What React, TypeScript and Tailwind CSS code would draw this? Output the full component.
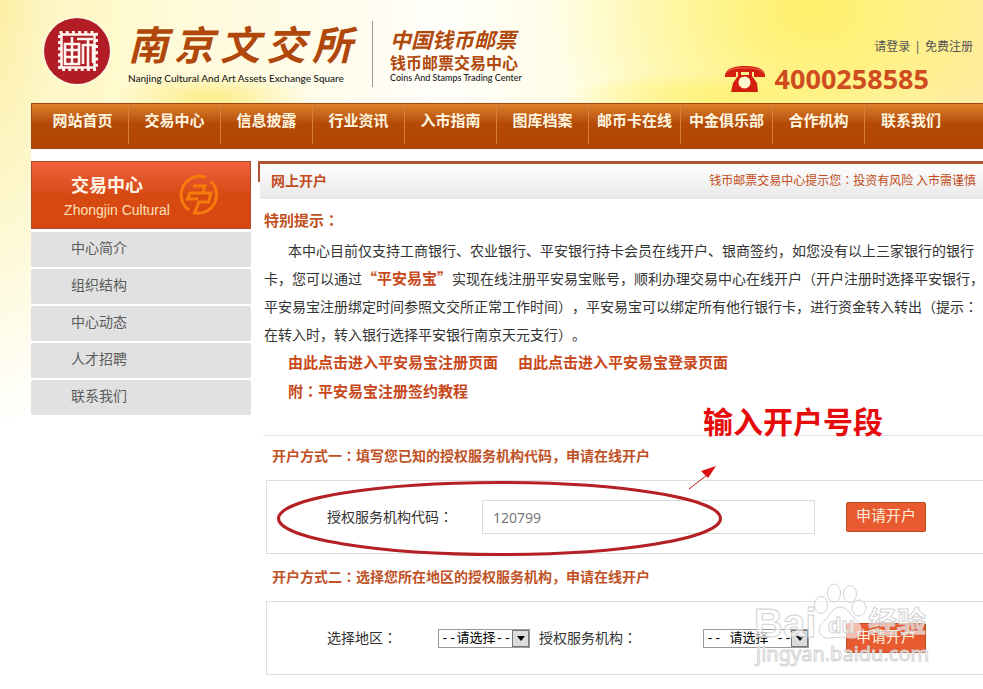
import React from 'react';

const NAV = ['网站首页', '交易中心', '信息披露', '行业资讯', '入市指南', '图库档案', '邮币卡在线', '中金俱乐部', '合作机构', '联系我们'];
const SIDE = ['中心简介', '组织结构', '中心动态', '人才招聘', '联系我们'];

/* Sets full-width colons in the middle of their cell. */
function Cn({ text }: { text: string }) {
  return (
    <>
      {text.split(/(：)/).map((part, i) =>
        part === '：' ? (
          <span key={i} lang="zh-TW" className="font-['Noto_Sans_CJK_TC',sans-serif]">
            {part}
          </span>
        ) : (
          part
        ),
      )}
    </>
  );
}

function SealLogo() {
  return (
    <svg viewBox="0 0 68 68" className="size-[68px] shrink-0" aria-hidden="true">
      <circle cx="34" cy="34" r="34" fill="#fffdf2" />
      <circle cx="34" cy="34" r="33" fill="#b11c25" />
      <rect x="16.500" y="15.500" width="37" height="37" fill="none" stroke="#fff5ee" strokeWidth="3" strokeDasharray="3 3.200" />
      <rect x="18.500" y="17.500" width="33" height="33" fill="none" stroke="#fff5ee" strokeWidth="2.500" />
      <g fill="none" stroke="#fff5ee" strokeWidth="2.600">
        <path d="M22 47V27H36V47ZM29 20V47M22 33H36M22 40H36" />
        <path d="M34 22H50M40 27V47M45 22V50M40 28H50V46" />
      </g>
    </svg>
  );
}

function PhoneIcon() {
  return (
    <svg viewBox="0 0 40 27" className="h-[27px] w-10 shrink-0" aria-hidden="true">
      <path d="M0 9C1 2 10 0 20 0S39 2 40 9V11H29V6H11V11H0Z" fill="#d41f10" />
      <path d="M1 7C6 2 12 2 20 2S34 2 39 7" fill="none" stroke="#ef6a4a" strokeWidth="1" />
      <path d="M13 6H16V9H24V6H27V10L32 17L33 26H6L8 17L13 10Z" fill="#d41f10" />
      <circle cx="19.500" cy="16.500" r="6" fill="#fffbd0" />
    </svg>
  );
}

function CoinIcon() {
  return (
    <svg viewBox="0 0 40 42" className="h-[42px] w-10 shrink-0" fill="none" stroke="#f57c0c" aria-hidden="true">
      <path d="M27 3.500A18.500 18.500 0 0 0 10 36M14 38.500A18.500 18.500 0 0 0 32 7.500" strokeWidth="3" />
      <path d="M14 12H26L23.500 19H11L8.500 25H19M23 19H32L29.500 28H20L15.500 39" strokeWidth="3" />
    </svg>
  );
}

function DropDown({ id, text, className }: { id: string; text: string; className: string }) {
  return (
    <span className={`relative h-[19px] ${className}`}>
      <select
        id={id}
        className="block h-[19px] w-full appearance-none border border-[#999] bg-white pl-0.5 font-['Liberation_Mono','Noto_Sans_CJK_SC',monospace] text-[13px] leading-[17px] text-black"
      >
        <option>{text}</option>
      </select>
      <span className="pointer-events-none absolute top-px right-px flex h-[17px] w-[17px] items-center justify-center border border-[#777] bg-[#dcdcdc]">
        <svg viewBox="0 0 8 5" className="h-[5px] w-2" aria-hidden="true">
          <path d="M0 0H8L4 5Z" fill="#000" />
        </svg>
      </span>
    </span>
  );
}

function ApplyButton({ className }: { className: string }) {
  return (
    <button
      type="button"
      className={`h-[30px] w-20 shrink-0 rounded-xs border border-[#c04a20] bg-[#e85a30] pb-1 text-[15px] leading-6 text-[#fff0dc] ${className}`}
    >
      申请开户
    </button>
  );
}

function Annotation() {
  return (
    <div className="pointer-events-none absolute top-[402px] left-[277px]">
      <svg viewBox="0 0 445 156" className="h-[156px] w-[445px]" fill="none" aria-hidden="true">
        <ellipse cx="222.500" cy="116.500" rx="221" ry="36" stroke="#b42024" strokeWidth="3" />
        <path d="M412 87L430 73" stroke="#c01818" strokeWidth="1" />
        <path d="M439 64L424 69L431 76Z" fill="#dc1010" />
      </svg>
      <p className="absolute top-0 left-[426px] text-[30px] leading-10 font-bold whitespace-nowrap text-[#e60c0c]">输入开户号段</p>
    </div>
  );
}

function Watermark() {
  return (
    <svg
      viewBox="0 0 180 90"
      className="pointer-events-none absolute top-[580px] left-[753px] h-[90px] w-[180px]"
      fill="#ffffff"
      fillOpacity="0.6"
      stroke="#d2d2d2"
      strokeWidth="1"
      aria-hidden="true"
    >
      <ellipse cx="68" cy="25" rx="6.500" ry="8.500" />
      <ellipse cx="81" cy="13" rx="6.500" ry="9" />
      <ellipse cx="97" cy="14" rx="6.500" ry="8.500" />
      <ellipse cx="106" cy="28" rx="7" ry="8" />
      <path d="M87 27C95 27 97 35 103 40C112 48 109 59 98 58C91 57 84 57 77 58C65 59 63 48 71 41C77 36 79 27 87 27Z" />
      <text x="1" y="57" fontSize="40" fontWeight="700" fontFamily="Liberation Sans, sans-serif">Bai</text>
      <text x="75" y="53" fontSize="22" fontWeight="700" fontFamily="Liberation Sans, sans-serif">du</text>
      <text x="115" y="53" fontSize="29" fontWeight="700" fontFamily="Noto Sans CJK SC, sans-serif">经验</text>
      <text x="3" y="81" fontSize="20" fontFamily="Noto Sans, sans-serif">jingyan.baidu.com</text>
    </svg>
  );
}

function Brand() {
  return (
    <>
      <div className="mt-[17px]">
        <SealLogo />
      </div>
      <div className="mt-[14px] ml-[17px] whitespace-nowrap">
        <p className="flex gap-1.5 font-['Noto_Sans_CJK_SC',sans-serif] text-[40px] leading-[58px] font-bold text-[#b0480c] italic">
          {['南', '京', '文', '交', '所'].map((c) => (
            <span key={c}>{c}</span>
          ))}
        </p>
        <p className="font-['Lato',sans-serif] text-[10px] leading-3 font-medium text-[#222]">Nanjing Cultural And Art Assets Exchange Square</p>
      </div>
    </>
  );
}

export default function App() {
  return (
    <div
      lang="zh-CN"
      className="relative min-h-screen overflow-hidden bg-white bg-[radial-gradient(ellipse_120px_430px_at_0_0,#fcefa4,#fdf4b8aa_50%,transparent),linear-gradient(to_bottom,transparent_55%,#ffffff88),radial-gradient(ellipse_100px_24px_at_210px_98px,#fdec80,transparent),radial-gradient(ellipse_160px_26px_at_720px_98px,#fff170,transparent),radial-gradient(ellipse_260px_190px_at_810px_10px,#fff06c,#fff27a88_50%,transparent),linear-gradient(to_right,transparent_30px,#fff9cc_90px,#fffbe0_24%,#fffefa_45%,#fffde0_62%,#fff4a0_85%,#fee9a8)] bg-[length:100%_440px,100%_160px,100%_160px,100%_160px,100%_160px,100%_160px] bg-no-repeat font-['Noto_Sans','Noto_Sans_CJK_SC',sans-serif] text-sm text-[#333] [text-spacing-trim:space-all]"
    >
      <header className="flex h-[103px] items-start pl-[43px]">
        <Brand />
        <div className="mt-[21px] ml-[20px] h-[66px] w-px bg-[#999]" />
        <div className="mt-[27px] ml-[17px] whitespace-nowrap">
          <p className="font-['Noto_Sans_CJK_SC',sans-serif] text-[21px] leading-[25px] font-bold text-[#b0480c] italic">中国钱币邮票</p>
          <p className="font-['Noto_Sans_CJK_SC',sans-serif] text-base leading-5 font-bold text-[#b0480c]">钱币邮票交易中心</p>
          <p className="font-['Lato',sans-serif] text-[9px] leading-3 font-medium text-[#222]">Coins And Stamps Trading Center</p>
        </div>
        <div className="mt-[37px] ml-auto flex flex-col">
          <div className="flex justify-end gap-1 pr-[10px] text-xs leading-5 text-[#555]">
            <a href="#login">请登录</a>
            <span>|</span>
            <a href="#register">免费注册</a>
          </div>
          <div className="flex items-center gap-2.5 pr-[54px]">
            <PhoneIcon />
            <span className="font-['Open_Sans',sans-serif] text-[27px] leading-11 font-bold text-[#cf4c20]">4000258585</span>
          </div>
        </div>
      </header>

      <nav className="ml-[31px] flex h-[46px] border-y border-l border-[#a0480c] bg-linear-to-b from-[#dd812c] via-[#b34a05] via-45% to-[#b34503] pl-[5px] font-['Noto_Sans_CJK_SC',sans-serif]">
        {NAV.map((item, i) => (
          <a
            key={item}
            href="#nav"
            className={`mt-0.5 flex h-[38px] w-[92px] shrink-0 justify-center text-[15px] leading-[28px] font-bold whitespace-nowrap text-[#fff6e0] ${i < NAV.length - 1 ? 'border-r border-[#d98038]' : ''}`}
          >
            {item}
          </a>
        ))}
      </nav>

      <div className="ml-[31px] flex bg-white">
        <aside className="mt-3 w-[220px] shrink-0 font-['Noto_Sans_CJK_SC',sans-serif]">
          <div className="flex h-[68px] items-center border border-[#b04a2c] bg-linear-to-b from-[#ee613c] via-[#d64a12] via-50% to-[#d84710] pl-8">
            <div className="w-[106px] pt-0.5 text-center whitespace-nowrap">
              <p className="pr-5 text-lg leading-7 font-bold text-[#fff6e8]">交易中心</p>
              <p className="font-['Liberation_Sans',sans-serif] text-sm leading-6 text-[#fbe0b8]">Zhongjin Cultural</p>
            </div>
            <div className="ml-[9px]">
              <CoinIcon />
            </div>
          </div>
          <ul className="mt-[3px] flex flex-col gap-0.5">
            {SIDE.map((item) => (
              <li key={item}>
                <a href="#side" className="block h-[35px] rounded-xs bg-[#e1e1e1] pl-10 text-sm leading-[30px] text-[#5c5c5c]">
                  {item}
                </a>
              </li>
            ))}
          </ul>
        </aside>

        <main className="mt-3 ml-[7px] min-w-0 flex-1 font-['Noto_Sans_CJK_SC',sans-serif] whitespace-nowrap">
          <div className="relative border-t-3 border-[#b4532f] pl-0.5">
            <div className="absolute top-0 left-0 h-[18px] w-0.5 bg-[#b4532f]" />
            <div className="flex h-[35px] items-center justify-between bg-linear-to-b from-white to-[#e8e8e8] pr-[7px] pb-1 pl-[11px] text-[#c04c20]">
              <h1 className="text-sm font-bold">网上开户</h1>
              <p className="text-xs">
                <Cn text="钱币邮票交易中心提示您：投资有风险 入市需谨慎" />
              </p>
            </div>
          </div>

          <section className="mt-[7px] pl-[6px] leading-7">
            <h2 className="mb-0.5 text-[15px] font-bold text-[#c25020]">
              <Cn text="特别提示：" />
            </h2>
            <p className="indent-6">
              <Cn text="本中心目前仅支持工商银行、农业银行、平安银行持卡会员在线开户、银商签约，如您没有以上三家银行的银行" />
              <br />
              <Cn text="卡，您可以通过" />
              <b className="text-[15px] leading-none text-[#c9481a]">“平安易宝”</b>
              <Cn text="实现在线注册平安易宝账号，顺利办理交易中心在线开户（开户注册时选择平安银行，" />
              <br />
              <Cn text="平安易宝注册绑定时间参照文交所正常工作时间），平安易宝可以绑定所有他行银行卡，进行资金转入转出（提示：" />
              <br />
              <Cn text="在转入时，转入银行选择平安银行南京天元支行）。" />
            </p>
            <div className="flex gap-5 pl-6 text-[15px] font-bold text-[#c9481a]">
              <a href="#signup">由此点击进入平安易宝注册页面</a>
              <a href="#signin">由此点击进入平安易宝登录页面</a>
            </div>
            <a href="#guide" className="ml-6 block text-[15px] leading-[30px] font-bold text-[#c9481a]">
              <Cn text="附：平安易宝注册签约教程" />
            </a>
          </section>

          <hr className="mt-[29px] ml-[5px] border-[#e4e4e4]" />

          <section>
            <h2 className="ml-[14px] pt-[5px] text-sm leading-7 font-bold text-[#c05226]">
              <Cn text="开户方式一：填写您已知的授权服务机构代码，申请在线开户" />
            </h2>
            <form className="mt-[11px] ml-2 flex h-[74px] items-center border-y border-l border-[#dedede] pl-[60px]">
              <label htmlFor="code" className="w-[155px] pb-0.5">
                <Cn text="授权服务机构代码：" />
              </label>
              <input
                id="code"
                type="text"
                defaultValue="120799"
                className="h-[34px] w-[333px] border border-[#dcdcdc] bg-white px-2.5 font-['Noto_Sans',sans-serif] text-sm text-[#777]"
              />
              <ApplyButton className="ml-[31px]" />
            </form>
          </section>

          <section>
            <h2 className="ml-[14px] pt-2 text-sm leading-7 font-bold text-[#c05226]">
              <Cn text="开户方式二：选择您所在地区的授权服务机构，申请在线开户" />
            </h2>
            <form className="mt-[11px] ml-2 flex h-[74px] items-center border-y border-l border-[#dedede] pl-[60px]">
              <label htmlFor="area" className="w-[111px] pb-0.5">
                <Cn text="选择地区：" />
              </label>
              <DropDown id="area" text="--请选择--" className="w-[92px]" />
              <label htmlFor="org" className="ml-[9px] w-[164px] pb-0.5">
                <Cn text="授权服务机构：" />
              </label>
              <DropDown id="org" text="-- 请选择 --" className="w-[106px]" />
              <ApplyButton className="ml-[37px]" />
            </form>
          </section>
        </main>
      </div>

      <Annotation />
      <Watermark />
    </div>
  );
}
